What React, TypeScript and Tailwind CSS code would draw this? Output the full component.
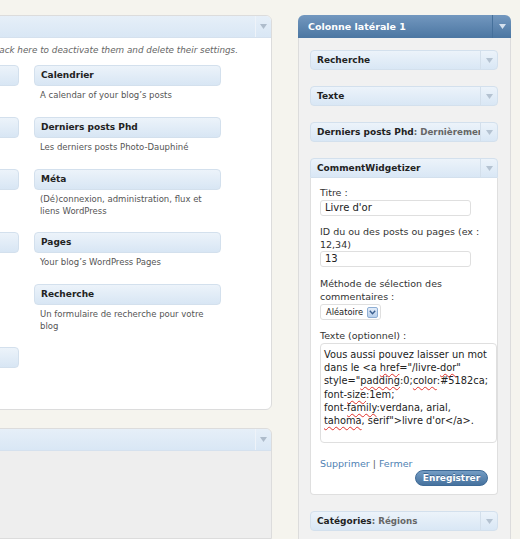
import React from "react";

type Item = { title: string; desc: string; h: string };

const leftItems: Item[] = [
  { title: "", desc: "", h: "h-[31px]" },
  { title: "", desc: "", h: "h-[31px]" },
  { title: "", desc: "", h: "h-[42px]" },
  { title: "", desc: "", h: "h-[94px]" },
  { title: "", desc: "", h: "h-[31px]" },
];

const rightItems: Item[] = [
  { title: "Calendrier", desc: "A calendar of your blog’s posts", h: "h-[31px]" },
  { title: "Derniers posts Phd", desc: "Les derniers posts Photo-Dauphiné", h: "h-[31px]" },
  { title: "Méta", desc: "(Dé)connexion, administration, flux et liens WordPress", h: "h-[42px]" },
  { title: "Pages", desc: "Your blog’s WordPress Pages", h: "h-[31px]" },
  { title: "Recherche", desc: "Un formulaire de recherche pour votre blog", h: "h-[42px]" },
];

const Arrow = ({ className = "" }: { className?: string }) => (
  <svg width="7" height="5" viewBox="0 0 7 5" className={className}>
    <path d="M0 0h7L3.5 5z" fill="currentColor" />
  </svg>
);

const Squiggle = ({ children }: { children: React.ReactNode }) => (
  <span className="underline decoration-[#e0302a] decoration-wavy decoration-1 underline-offset-2">
    {children}
  </span>
);

const Column = ({ items }: { items: Item[] }) => (
  <div className="flex w-[187px] shrink-0 flex-col">
    {items.map((it, i) => (
      <div key={i}>
        <div className="h-[21px] rounded-[4px] border border-[#d3e0ed] bg-linear-to-b from-[#ecf3fa] to-[#d8e6f4] pl-[6px] text-[9px] font-bold leading-[19px] text-[#222]">
          {it.title}
        </div>
        <div className={`${it.h} pl-[6px] pr-[15px] pt-[4px] text-[8.5px] leading-[11.5px] text-[#555]`}>
          {it.desc}
        </div>
      </div>
    ))}
  </div>
);

const WidgetHead = ({ title, extra, open }: { title: string; extra?: string; open?: boolean }) => (
  <div
    className={`flex h-[20px] shrink-0 border border-[#d3e0ed] bg-linear-to-b from-[#ecf3fa] to-[#d9e7f5] ${
      open ? "rounded-t-[4px]" : "rounded-[4px]"
    }`}
  >
    <div className="min-w-0 flex-1 overflow-hidden whitespace-nowrap pl-[6px] text-[9px] font-bold leading-[18px] text-[#222]">
      {title}
      {extra && <span className="text-[8.7px] text-[#666]">: {extra}</span>}
    </div>
    <div className="flex w-[17px] items-center justify-center border-l border-[#d3dfeb]">
      <Arrow className="text-[#b4c2d1]" />
    </div>
  </div>
);

const CommentWidgetizer = () => (
  <div className="flex flex-col">
    <WidgetHead title="CommentWidgetizer" open />
    <div className="flex flex-col rounded-b-[4px] border-x border-b border-[#dfdfdf] bg-white pb-[8px] pl-[9px] pt-[8px] text-[9.5px] leading-[13px] text-[#333]">
      <label>Titre :</label>
      <div className="mt-[1px] h-[16px] w-[151px] rounded-[3px] border border-[#dfdfdf] pl-[4px] text-[10px] leading-[14px] text-[#222]">
        Livre d'or
      </div>
      <label className="mt-[9px] pr-[4px]">ID du ou des posts ou pages (ex : 12,34)</label>
      <div className="h-[16px] w-[151px] rounded-[3px] border border-[#dfdfdf] pl-[4px] text-[10px] leading-[14px] text-[#222]">
        13
      </div>
      <label className="mt-[10px] pr-[4px]">Méthode de sélection des commentaires :</label>
      <div className="mt-[1px] flex h-[16px] w-[61px] items-center justify-between rounded-[3px] border border-[#dfdfdf] pl-[5px] pr-[2px] text-[8.3px] text-[#222]">
        <span>Aléatoire</span>
        <span className="flex h-[11px] w-[11px] items-center justify-center rounded-[2px] border border-[#8eaed4] bg-linear-to-b from-[#e3edf9] to-[#b8cfeb]">
          <svg width="7" height="5" viewBox="0 0 7 5">
            <path d="M0.8 0.8L3.5 3.8L6.2 0.8" fill="none" stroke="#3b5f8f" strokeWidth="1.4" />
          </svg>
        </span>
      </div>
      <label className="mt-[9px]">Texte (optionnel) :</label>
      <div className="mt-[1px] h-[100px] w-[177px] rounded-[4px] border border-[#dfdfdf] px-[3px] pt-[4px] text-[9.8px] leading-[13.2px] whitespace-nowrap text-[#222]">
        <div>Vous aussi pouvez laisser un mot</div>
        <div>
          {"dans le <a "}
          <Squiggle>href</Squiggle>
          {'="/livre-'}
          <Squiggle>dor</Squiggle>
          {'"'}
        </div>
        <div>
          {'style="'}
          <Squiggle>padding</Squiggle>
          {":0;"}
          <Squiggle>color</Squiggle>
          {":#5182ca;"}
        </div>
        <div>
          {"font-"}
          <Squiggle>size</Squiggle>
          {":1em;"}
        </div>
        <div>
          {"font-"}
          <Squiggle>family</Squiggle>
          {":verdana, arial,"}
        </div>
        <div>
          <Squiggle>tahoma</Squiggle>
          {', serif">livre d\'or</a>.'}
        </div>
      </div>
      <div className="mt-[14px] text-[9.5px] text-[#666]">
        <span className="text-[#4f82b3]">Supprimer</span> | <span className="text-[#4f82b3]">Fermer</span>
      </div>
      <div className="flex justify-end pr-[9px]">
        <button className="h-[16px] w-[73px] rounded-full border border-[#3f6b97] bg-linear-to-b from-[#739cc4] to-[#46729e] text-[9px] font-bold leading-[14px] text-white [text-shadow:0_-1px_0_#3a6590]">
          Enregistrer
        </button>
      </div>
    </div>
  </div>
);

export default function App() {
  return (
    <div className="flex h-[539px] w-[520px] gap-[26px] overflow-hidden bg-[#f5f4ee] pt-[15px] font-['DejaVu_Sans',Verdana,sans-serif] text-[#333]">
      <div className="ml-[-228px] flex w-[500px] shrink-0 flex-col">
        <div className="flex h-[395px] flex-col overflow-hidden rounded-r-[6px] border border-[#dcdcdc] bg-white">
          <div className="flex h-[22px] shrink-0 border-b border-[#d5e1ee] bg-linear-to-b from-[#e6eff8] to-[#d9e7f5]">
            <div className="flex-1" />
            <div className="flex w-[16px] items-center justify-center border-l border-[#eef3f9]">
              <Arrow className="text-[#aebccb]" />
            </div>
          </div>
          <div className="flex justify-end overflow-hidden pr-[33px] pt-[6px]">
            <span className="shrink-0 whitespace-nowrap text-[8.8px] italic leading-[12px] text-[#666]">
              Drag widgets from a sidebar back here to deactivate them and delete their settings.
            </span>
          </div>
          <div className="mt-[9px] flex gap-[15px] pl-[59px]">
            <Column items={leftItems} />
            <Column items={rightItems} />
          </div>
        </div>
        <div className="mt-[18px] flex flex-1 flex-col overflow-hidden rounded-tr-[6px] border border-[#dcdcdc] bg-[#eeeeee]">
          <div className="flex h-[22px] shrink-0 border-b border-[#d5e1ee] bg-linear-to-b from-[#e6eff8] to-[#d9e7f5]">
            <div className="flex-1" />
            <div className="flex w-[16px] items-center justify-center border-l border-[#eef3f9]">
              <Arrow className="text-[#aebccb]" />
            </div>
          </div>
        </div>
      </div>

      <div className="flex w-[213px] shrink-0 flex-col">
        <div className="flex h-[23px] shrink-0 rounded-t-[6px] bg-linear-to-b from-[#7398bf] to-[#4b76a2]">
          <div className="flex-1 pl-[10px] text-[9.5px] font-bold leading-[23px] text-white">
            Colonne latérale 1
          </div>
          <div className="flex w-[19px] items-center justify-center border-l border-[#45709b]">
            <Arrow className="text-[#d5e1ee]" />
          </div>
        </div>
        <div className="flex flex-1 flex-col gap-[16px] border-x border-[#dcdcdc] bg-[#f1f1f1] pl-[11px] pr-[12px] pt-[12px]">
          <WidgetHead title="Recherche" />
          <WidgetHead title="Texte" />
          <WidgetHead title="Derniers posts Phd" extra="Dernièrement sur le blog" />
          <CommentWidgetizer />
          <WidgetHead title="Catégories" extra="Régions" />
        </div>
      </div>
    </div>
  );
}
